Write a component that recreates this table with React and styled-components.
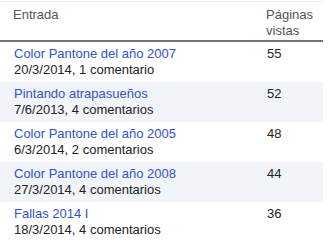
import styled, { createGlobalStyle } from "styled-components";

const posts = [
  { title: "Color Pantone del año 2007", meta: "20/3/2014, 1 comentario", views: 55 },
  { title: "Pintando atrapasueños", meta: "7/6/2013, 4 comentarios", views: 52 },
  { title: "Color Pantone del año 2005", meta: "6/3/2014, 2 comentarios", views: 48 },
  { title: "Color Pantone del año 2008", meta: "27/3/2014, 4 comentarios", views: 44 },
  { title: "Fallas 2014 I", meta: "18/3/2014, 4 comentarios", views: 36 },
];

const GlobalStyle = createGlobalStyle`
  body {
    margin: 0;
    background: #ffffff;
    font-family: "Liberation Sans", Arial, sans-serif;
  }
`;

const App = () => {
  return (
    <>
      <GlobalStyle />
      <TableStyled>
        <HeaderRowStyled>
          <HeadCellStyled>Entrada</HeadCellStyled>
          <HeadCellStyled $num>
            Páginas
            <br />
            vistas
          </HeadCellStyled>
        </HeaderRowStyled>
        {posts.map((post, idx) => (
          <RowStyled key={post.title} $shaded={idx % 2 === 1}>
            <CellStyled>
              <LinkStyled href="#">{post.title}</LinkStyled>
              <MetaStyled>{post.meta}</MetaStyled>
            </CellStyled>
            <CellStyled $num>{post.views}</CellStyled>
          </RowStyled>
        ))}
      </TableStyled>
    </>
  );
};

const TableStyled = styled.div({
  width: "323px",
  marginTop: "1px",
  borderTop: "1px solid #ebebeb",
  fontSize: "13px",
  lineHeight: "16px",
});

const HeaderRowStyled = styled.div({
  display: "grid",
  gridTemplateColumns: "1fr 60px",
  height: "38px",
  borderBottom: "2px solid #737373",
});

const HeadCellStyled = styled.div`
  padding-top: 5px;
  padding-left: ${(p) => (p.$num ? "3px" : "13px")};
  color: #555555;
`;

const RowStyled = styled.div`
  display: grid;
  grid-template-columns: 1fr 60px;
  height: 40px;
  background: ${(p) => (p.$shaded ? "#f1f5fa" : "#ffffff")};
`;

const CellStyled = styled.div`
  padding-top: 4px;
  padding-left: ${(p) => (p.$num ? "4px" : "14px")};
  color: #222222;
`;

const LinkStyled = styled.a({
  display: "block",
  color: "#3152cc",
  textDecoration: "none",
});

const MetaStyled = styled.div({
  color: "#222222",
});

export default App;
